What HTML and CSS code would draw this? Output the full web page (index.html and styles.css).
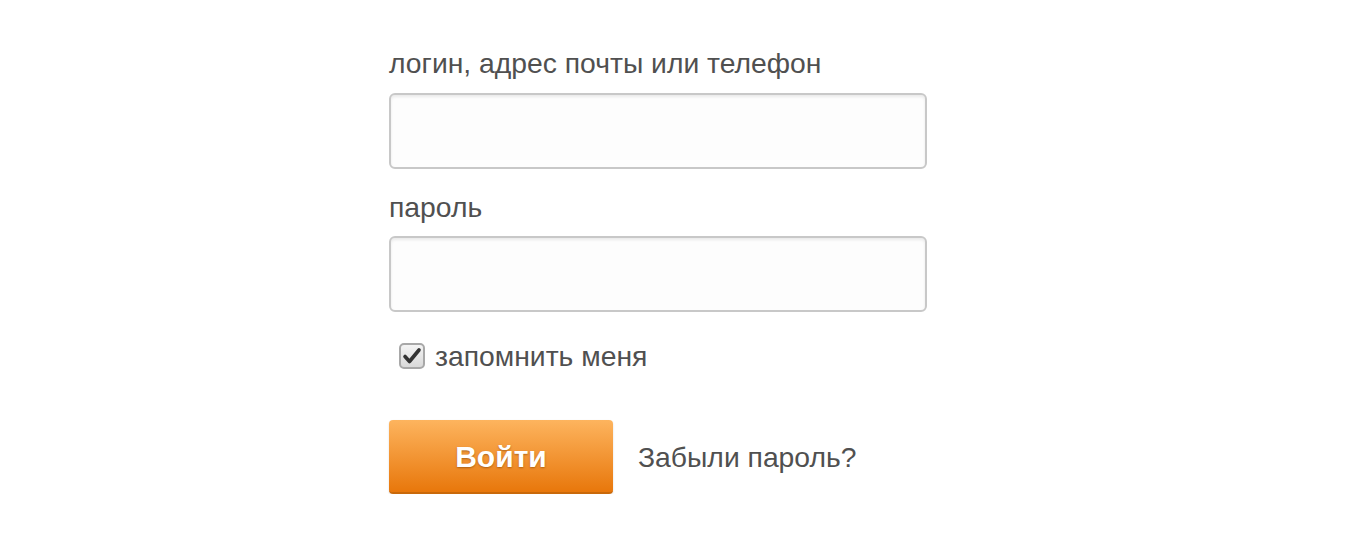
FILE: index.html
```html
<!DOCTYPE html>
<html lang="ru">
<head>
    <meta charset="UTF-8">
    <meta name="viewport" content="width=device-width, initial-scale=1.0">
    <title>Вход</title>
    <link rel="stylesheet" href="styles.css">
</head>
<body>
    <form class="login-form">
        <label class="field-label" for="login">логин, адрес почты или телефон</label>
        <input class="field-input" type="text" id="login">

        <label class="field-label field-label-second" for="password">пароль</label>
        <input class="field-input" type="password" id="password">

        <label class="remember">
            <span class="checkbox">
                <svg width="20" height="18" viewBox="0 0 20 18">
                    <path d="M3 9.5 L7.5 14.5 L17 3" fill="none" stroke="#333" stroke-width="3.6" stroke-linecap="round" stroke-linejoin="round"/>
                </svg>
            </span>
            <span>запомнить меня</span>
        </label>

        <div class="actions">
            <button type="button" class="submit">Войти</button>
            <a href="#" class="forgot">Забыли пароль?</a>
        </div>
    </form>
</body>
</html>
```

FILE: styles.css
```css
body {
    margin: 0;
    background: #fff;
    font-family: "Liberation Sans", Arial, sans-serif;
    color: #505050;
}
.login-form {
    display: flex;
    flex-direction: column;
    align-items: flex-start;
    width: 538px;
    padding: 48px 0 0 389px;
}
.field-label {
    font-size: 28.3px;
    line-height: 30px;
    margin-bottom: 15px;
}
.field-label-second {
    margin-top: 23px;
    margin-bottom: 14px;
}
.field-input {
    box-sizing: border-box;
    width: 538px;
    height: 76px;
    border: 2px solid #c8c8c8;
    border-radius: 6px;
    background: #fdfdfd;
    box-shadow: inset 0 2px 3px rgba(0, 0, 0, 0.08);
    font-size: 24px;
    padding: 0 14px;
    outline: none;
}
.remember {
    display: flex;
    align-items: center;
    gap: 10px;
    margin: 29px 0 0 10px;
    font-size: 28.3px;
    line-height: 30px;
}
.checkbox {
    box-sizing: border-box;
    width: 26px;
    height: 26px;
    border: 2px solid #a8a8a8;
    border-radius: 5px;
    background: linear-gradient(#f4f4f4, #d9d9d9);
    display: flex;
    align-items: center;
    justify-content: center;
}
.actions {
    display: flex;
    align-items: center;
    gap: 25px;
    margin-top: 49px;
}
.submit {
    width: 224px;
    height: 74px;
    padding-top: 3px;
    border: none;
    border-bottom: 2px solid #c9690a;
    border-radius: 4px;
    background: linear-gradient(#fdb45e, #e8770b);
    color: #fff;
    font-family: "Liberation Sans", Arial, sans-serif;
    font-size: 30px;
    font-weight: bold;
    text-shadow: 0 1px 2px rgba(120, 60, 0, 0.55);
    box-shadow: 0 1px 2px rgba(0, 0, 0, 0.15);
    cursor: pointer;
}
.forgot {
    font-size: 28.3px;
    color: #505050;
    text-decoration: none;
}
```
